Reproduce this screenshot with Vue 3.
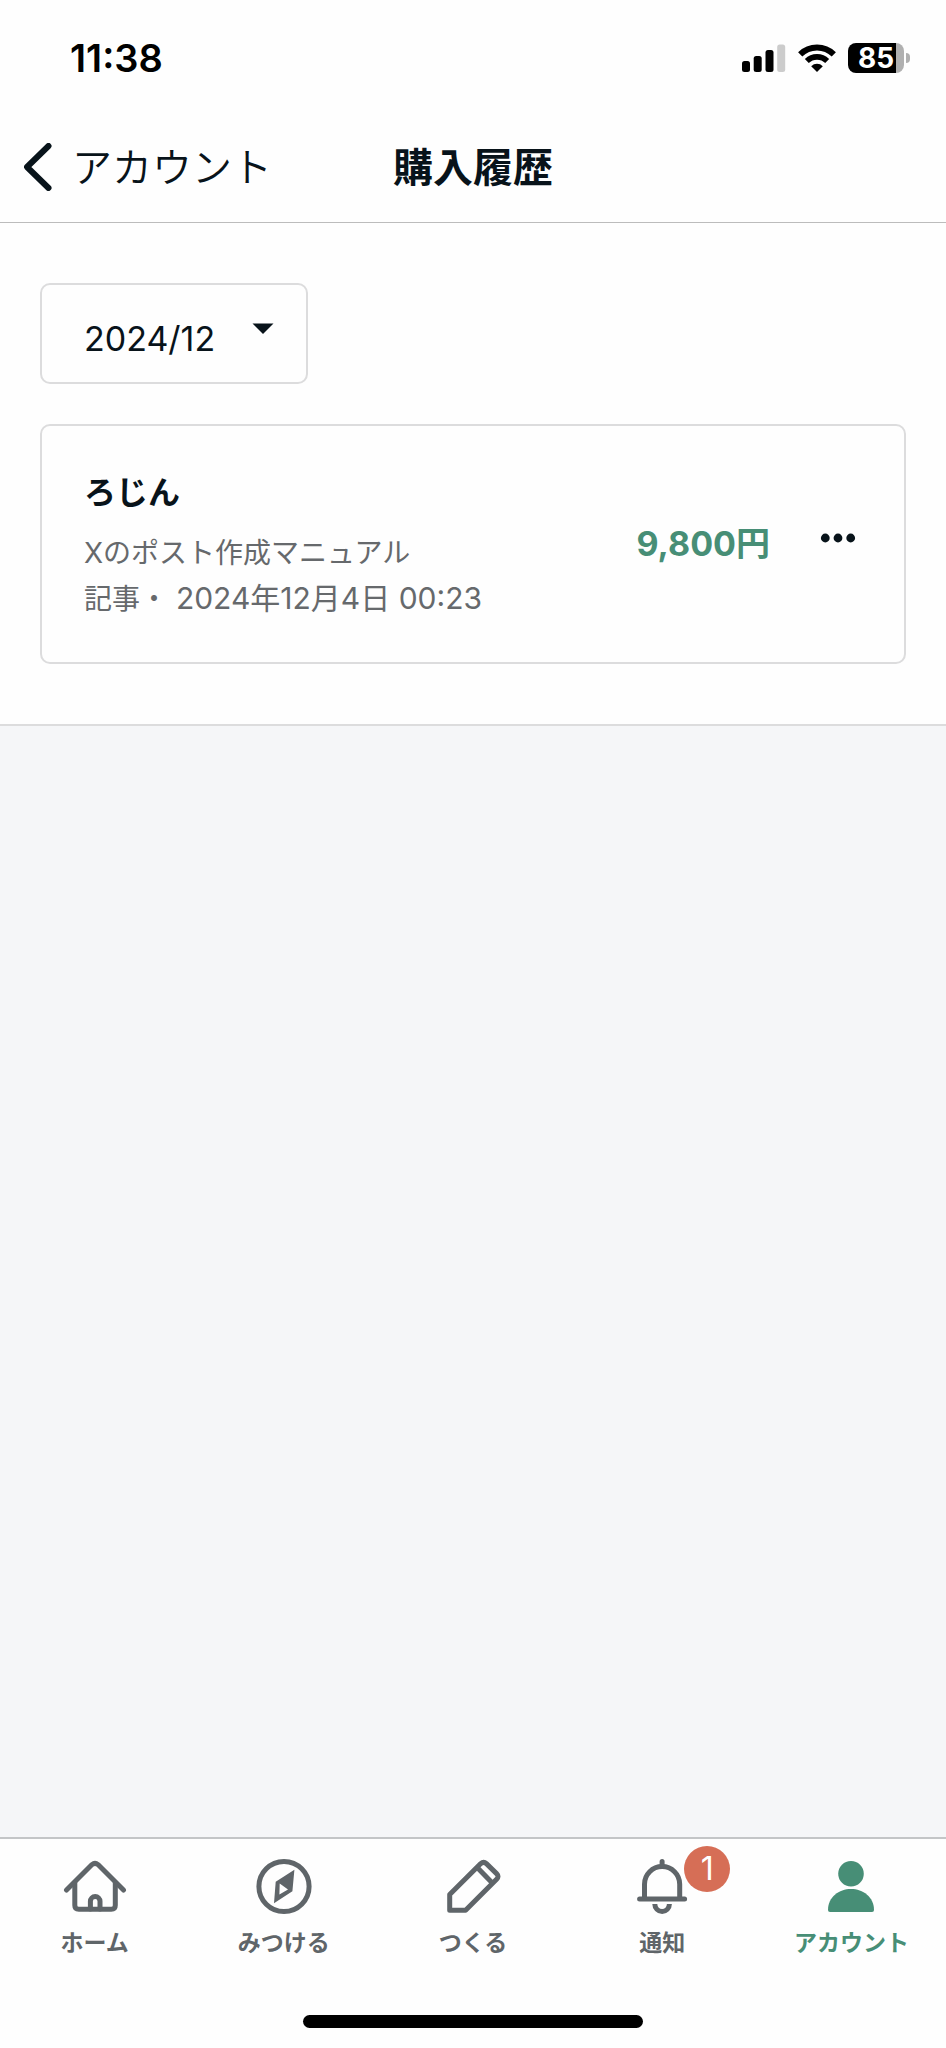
<script setup>
import { ref } from 'vue'

const month = ref('2024/12')
const months = ['2024/12']

const purchases = [
  {
    id: 1,
    seller: 'ろじん',
    title: 'Xのポスト作成マニュアル',
    kind: '記事',
    date: '2024年12月4日 00:23',
    price: '9,800円'
  }
]

const tabs = [
  { id: 'home', label: 'ホーム' },
  { id: 'explore', label: 'みつける' },
  { id: 'create', label: 'つくる' },
  { id: 'notice', label: '通知', badge: 1 },
  { id: 'account', label: 'アカウント' }
]
const activeTab = ref('account')
</script>

<template>
  <div class="screen" lang="ja">
    <div class="status-bar">
      <span class="time">11:38</span>
      <div class="status-icons">
        <svg width="44" height="30" viewBox="0 0 44 30" aria-hidden="true">
          <rect x="0" y="18" width="8" height="11" rx="2.5" />
          <rect x="11.7" y="13" width="8" height="16" rx="2.5" />
          <rect x="23.5" y="7" width="8" height="22" rx="2.5" />
          <rect x="35.2" y="1.5" width="8" height="27.5" rx="2.5" fill="#cccccc" />
        </svg>
        <svg width="38" height="30" viewBox="0 0 38 30" aria-hidden="true">
          <g fill="none" stroke="#000" stroke-width="6">
            <path d="M2.2 11.4 A24 24 0 0 1 35.8 11.4" />
            <path d="M8.8 18 A14.6 14.6 0 0 1 29.2 18" stroke-width="5.6" />
          </g>
          <path d="M19 29 L13.2 23.2 A8.2 8.2 0 0 1 24.8 23.2 Z" />
        </svg>
        <div class="battery">
          <span class="battery-body">85</span>
          <span class="battery-nub"></span>
        </div>
      </div>
    </div>

    <header class="header">
      <a href="#" class="back">
        <svg width="28" height="48" viewBox="0 0 28 48" aria-hidden="true">
          <path d="M24.5 3 L3 24 L24.5 45" fill="none" stroke="currentColor" stroke-width="6" stroke-linecap="round" stroke-linejoin="round" />
        </svg>
        <span>アカウント</span>
      </a>
      <h1>購入履歴</h1>
    </header>

    <main class="content">
      <section class="history">
        <div class="month">
          <select v-model="month" aria-label="購入月">
            <option v-for="m in months" :key="m" :value="m">{{ m }}</option>
          </select>
          <svg class="caret" width="22" height="12" viewBox="0 0 22 12" aria-hidden="true">
            <path d="M0.5 0.5 H21.5 L11 11 Z" />
          </svg>
        </div>

        <article v-for="item in purchases" :key="item.id" class="card">
          <div class="info">
            <h2>{{ item.seller }}</h2>
            <p>{{ item.title }}</p>
            <p>{{ item.kind }}・ <time>{{ item.date }}</time></p>
          </div>
          <span class="price">{{ item.price }}</span>
          <button class="more" type="button" aria-label="メニュー">
            <svg width="36" height="10" viewBox="0 0 36 10" aria-hidden="true">
              <circle cx="5.3" cy="5" r="4.4" />
              <circle cx="18" cy="5" r="4.4" />
              <circle cx="30.7" cy="5" r="4.4" />
            </svg>
          </button>
        </article>
      </section>
    </main>

    <nav class="tab-bar">
      <div class="tabs">
        <a
          v-for="tab in tabs"
          :key="tab.id"
          href="#"
          class="tab"
          :class="{ active: tab.id === activeTab }"
          @click.prevent="activeTab = tab.id"
        >
          <span class="tab-icon">
            <svg width="64" height="60" viewBox="0 0 64 60" fill="none" stroke="currentColor" stroke-width="5" stroke-linecap="round" stroke-linejoin="round" aria-hidden="true">
              <template v-if="tab.id === 'home'">
                <path d="M3.5 33 L29 7.6 Q32 5 35 7.6 L60.5 33" />
                <path d="M11.8 26 V48.3 Q11.8 52.3 15.8 52.3 H48.3 Q52.3 52.3 52.3 48.3 V26" />
                <path d="M27.4 52 V44.3 A4.8 4.8 0 0 1 37 44.3 V52" />
              </template>
              <template v-else-if="tab.id === 'explore'">
                <circle cx="32" cy="29.5" r="25.1" />
                <path d="M42.4 12.7 L40.4 34.3 L22 46.3 L23.7 24.7 Z M27.7 26.5 L27.4 37.6 L36 32.4 Z" fill="currentColor" fill-rule="evenodd" stroke="none" />
              </template>
              <template v-else-if="tab.id === 'create'">
                <path d="M8.7 53.3 V37.6 L39.8 6.6 Q42.6 4 45.4 6.6 L55.6 16.6 Q58.4 19.4 55.6 22.2 L24.6 53.3 Z" />
                <path d="M36.7 11 L50.6 25.2" />
              </template>
              <template v-else-if="tab.id === 'notice'">
                <path d="M14.5 41 V27.2 A17.6 17.6 0 0 1 49.7 27.2 V41" />
                <path d="M9.6 42 H54.6 M32.1 4.5 V8" />
                <path d="M24.8 47 A7.3 7.6 0 0 0 39.4 47" stroke-linecap="butt" />
              </template>
              <template v-else>
                <circle cx="32" cy="16.7" r="12.8" fill="currentColor" stroke="none" />
                <path d="M9 53 C9 40 20 32 32 32 C44 32 55 40 55 53 Q55 55 53 55 H11 Q9 55 9 53 Z" fill="currentColor" stroke="none" />
              </template>
            </svg>
            <span v-if="tab.badge" class="badge">{{ tab.badge }}</span>
          </span>
          <span>{{ tab.label }}</span>
        </a>
      </div>
      <div class="home-indicator"></div>
    </nav>
  </div>
</template>

<style>
body {
  margin: 0;
  background: #fefefe;
}
</style>

<style scoped>
.screen {
  min-height: 100vh;
  display: flex;
  flex-direction: column;
  background: #fefefe;
  color: #08131a;
  font-family: Inter, 'Noto Sans CJK JP', sans-serif;
}

.status-bar {
  display: flex;
  align-items: center;
  justify-content: space-between;
  padding: 36px 36px 32px 70px;
  line-height: 44px;
  color: #000;
}

.time {
  font-size: 38px;
  font-weight: 600;
}

.status-icons {
  display: flex;
  align-items: center;
  gap: 12px;
}

.battery {
  display: flex;
  align-items: center;
  gap: 2px;
}

.battery-body {
  width: 56px;
  height: 30px;
  border-radius: 8px;
  background: linear-gradient(to right, #000 48px, #b0b0b0 48px);
  color: #fff;
  font-size: 28px;
  font-weight: 700;
  line-height: 30px;
  text-align: center;
}

.battery-nub {
  width: 4px;
  height: 10px;
  border-radius: 0 4px 4px 0;
  background: #b0b0b0;
}

.header {
  display: grid;
  grid-template-columns: 1fr auto 1fr;
  align-items: center;
  height: 110px;
  padding: 0 24px;
  border-bottom: 1px solid #bcbcbc;
}

.back {
  display: flex;
  align-items: center;
  gap: 20px;
  color: inherit;
  text-decoration: none;
  font-size: 40px;
  font-weight: 350;
}

.back span,
.header h1 {
  padding-bottom: 4px;
}

.header h1 {
  margin: 0;
  font-size: 40px;
  font-weight: 700;
}

.content {
  flex: 1;
  background: #f5f6f8;
}

.history {
  display: flex;
  flex-direction: column;
  align-items: flex-start;
  gap: 40px;
  padding: 60px 40px;
  background: #fefefe;
  border-bottom: 2px solid #dcdcdd;
}

.month {
  position: relative;
}

.month select {
  width: 268px;
  height: 101px;
  padding: 10px 42px 0;
  border: 2px solid #dcdcdd;
  border-radius: 10px;
  background: transparent;
  color: inherit;
  font-family: inherit;
  font-size: 34px;
  appearance: none;
}

.caret {
  position: absolute;
  top: 40px;
  right: 34px;
  fill: currentColor;
  pointer-events: none;
}

.card {
  align-self: stretch;
  display: flex;
  align-items: center;
  padding: 44px 48px 40px 42px;
  border: 2px solid #dcdcdd;
  border-radius: 10px;
}

.info {
  flex: 1;
}

.info h2 {
  margin: 0 0 14px;
  font-size: 32px;
  font-weight: 700;
  line-height: 46px;
}

.info p {
  margin: 0;
  font-size: 28px;
  line-height: 46px;
  color: #66696c;
}

.info time {
  font-size: 30px;
  line-height: 1;
}

.price {
  padding-bottom: 10px;
  font-size: 34px;
  font-weight: 700;
  color: #478e76;
}

.more {
  display: flex;
  margin-left: 50px;
  padding: 0 0 16px;
  border: none;
  background: none;
  color: inherit;
  fill: currentColor;
  cursor: pointer;
}

.tab-bar {
  display: flex;
  flex-direction: column;
  align-items: center;
  gap: 54px;
  padding: 18px 0 20px;
  border-top: 2px solid #c3c5c7;
}

.tabs {
  display: flex;
  align-self: stretch;
}

.tab {
  flex: 1;
  display: flex;
  flex-direction: column;
  align-items: center;
  gap: 8px;
  color: #5f6569;
  font-size: 23px;
  font-weight: 600;
  line-height: 36px;
  text-decoration: none;
}

.tab.active {
  color: #478e76;
}

.tab-icon {
  position: relative;
  display: flex;
}

.badge {
  position: absolute;
  top: -11px;
  left: 54px;
  width: 46px;
  height: 46px;
  border-radius: 50%;
  background: #d66e56;
  color: #fff;
  font-size: 32px;
  font-weight: 400;
  line-height: 46px;
  text-align: center;
}

.home-indicator {
  width: 36%;
  height: 13px;
  border-radius: 7px;
  background: #000;
}
</style>
